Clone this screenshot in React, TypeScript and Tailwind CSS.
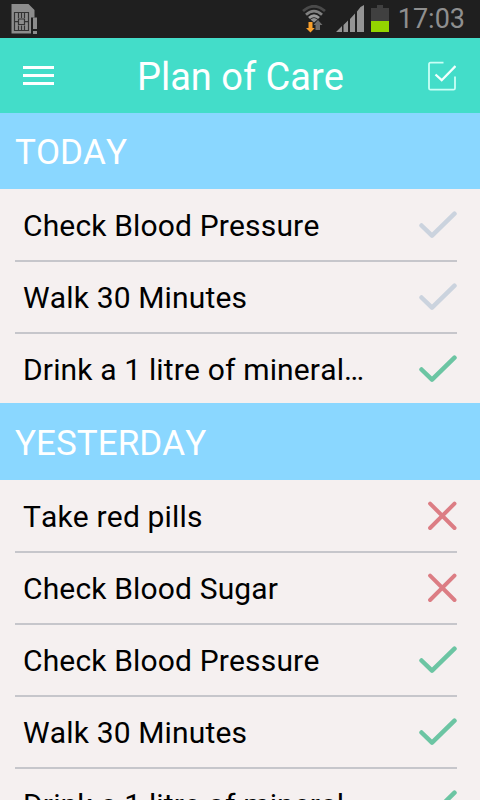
type Status = 'pending' | 'done' | 'missed'

const sections: { title: string; titleClass: string; items: { label: string; status: Status }[] }[] = [
  {
    title: 'TODAY',
    titleClass: 'h-[76px] pt-[2px]',
    items: [
      { label: 'Check Blood Pressure', status: 'pending' },
      { label: 'Walk 30 Minutes', status: 'pending' },
      { label: 'Drink a 1 litre of mineral…', status: 'done' },
    ],
  },
  {
    title: 'YESTERDAY',
    titleClass: 'h-[77px] pt-[3px]',
    items: [
      { label: 'Take red pills', status: 'missed' },
      { label: 'Check Blood Sugar', status: 'missed' },
      { label: 'Check Blood Pressure', status: 'done' },
      { label: 'Walk 30 Minutes', status: 'done' },
      { label: 'Drink a 1 litre of mineral…', status: 'done' },
    ],
  },
]

const SimIcon = () => (
  <svg width="28" height="32" viewBox="0 0 28 32" className="mt-[3px] ml-[10px]">
    <path d="M1.500 1h17l6 6v7.500h-3.500V30.500H1.500z" fill="#8c8c8c" />
    <path d="M4.500 9.500h14v18h-14zM8.500 10v5M11.500 10v5M14.500 10v5M8.500 22.500v5M11.500 22.500v5M14.500 22.500v5M4.500 18.700h4M14.500 18.700h4M8.500 16h6v5.500h-6z" fill="none" stroke="#333" strokeWidth="1.200" />
    <path d="M23 14.500h4V26h-4zM23 28h4v3h-4z" fill="#8c8c8c" />
  </svg>
)

const WifiIcon = () => (
  <svg width="28" height="30" viewBox="0 0 28 30">
    <g fill="none" strokeWidth="2.800">
      <path d="M2 6Q13-3.500 24 6" stroke="#4a4a4a" />
      <path d="M5 9.700Q13 2.500 21 9.700" stroke="#808080" />
      <path d="M8 13Q13 8.500 18 13" stroke="#9a9a9a" />
    </g>
    <path d="M9.500 14.500q3.500-3 7 0l-3.500 3z" fill="#8f8f8f" />
    <path d="M7.500 17h4v6h2.300L9.500 27.500 5 23h2.500z" fill="#f9a02c" />
    <path d="M14.500 25v-5h-2l4.500-5 4.500 5h-2.500v5z" fill="#6d6d6d" />
  </svg>
)

const SignalIcon = () => (
  <svg width="28" height="28" viewBox="0 0 28 28">
    <path d="M0 27l6-6v6zM7.500 20l4.500-4.500V27H7.500zM14 14l5-5.500V27h-5zM21 6.500l3.500-4.500L28 0v27h-7z" fill="#949494" />
  </svg>
)

const BatteryIcon = () => (
  <svg width="18" height="27" viewBox="0 0 18 27">
    <path d="M6 0h6v3h6v13H0V3h6z" fill="#404040" />
    <path d="M0 16h18v11H0z" fill="#94d500" />
  </svg>
)

const StatusIcon = ({ status }: { status: Status }) => {
  if (status === 'missed') {
    return (
      <svg width="30" height="30" viewBox="0 0 30 30" className="shrink-0">
        <path d="M3.100 2.600l24.400 24.400M27.500 2.600L3.100 27" fill="none" stroke="#dc7d84" strokeWidth="4" strokeLinecap="round" />
      </svg>
    )
  }
  return (
    <svg width="38" height="28" viewBox="0 0 38 28" className="shrink-0">
      <path d="M2.500 14.500L13 24.700L35.500 2.700" fill="none" stroke={status === 'done' ? '#6cc5a3' : '#cbd3de'} strokeWidth="4.500" strokeLinecap="round" strokeLinejoin="round" />
    </svg>
  )
}

const App = () => {
  return (
    <div className="h-[800px] w-[480px] overflow-hidden bg-[#f5f0f0] font-['Roboto',sans-serif] [font-kerning:none]">
      {/* Status bar */}
      <div className="flex h-[38px] items-start bg-[#1f1f1f]">
        <SimIcon />
        <div className="ml-auto flex h-full items-start pr-[15px] pt-[5px]">
          <WifiIcon />
          <div className="ml-[7px]"><SignalIcon /></div>
          <div className="ml-[7px]"><BatteryIcon /></div>
          <span className="ml-[9px] text-[27px] leading-[28px] text-[#8f8f8f]">17:03</span>
        </div>
      </div>

      {/* App bar */}
      <header className="flex h-[75px] items-center justify-between bg-[#43ddc9] pl-[23px] pr-[24px]">
        <div className="flex w-[31px] flex-col gap-[5px]">
          <div className="h-[3px] bg-white" />
          <div className="h-[3px] bg-white" />
          <div className="h-[3px] bg-white" />
        </div>
        <h1 className="pr-px pt-[3px] text-[38px] leading-none text-white">Plan of Care</h1>
        <svg width="28" height="30" viewBox="0 0 28 30" fill="none" stroke="#c9fff6" strokeWidth="1.800">
          <path d="M15.500 1.700H2.500Q1 1.700 1 3.200v24q0 1.500 1.500 1.500h23q1.500 0 1.500-1.500V15.500" />
          <path d="M7.500 13.500l6.200 5.700L27.500 5" stroke="#f2fffd" strokeWidth="2.300" />
        </svg>
      </header>

      {/* Plan items grouped by day */}
      {sections.map((section) => (
        <section key={section.title}>
          <h2 className={`flex items-center bg-[#8ad7ff] pl-[15px] text-[35px] leading-none tracking-[0.05px] text-white ${section.titleClass}`}>
            {section.title}
          </h2>
          <ul className="pl-[15px] pr-[23px] pt-px">
            {section.items.map((item) => (
              <li
                key={item.label}
                className="flex h-[72px] items-center justify-between border-b-2 border-[#c6c6cb] pl-[8px] last:h-[69px] last:border-b-0"
              >
                <span className="pt-[2px] text-[30px] leading-[40px] tracking-[0.15px] whitespace-nowrap text-black">{item.label}</span>
                <StatusIcon status={item.status} />
              </li>
            ))}
          </ul>
        </section>
      ))}
    </div>
  )
}

export default App
